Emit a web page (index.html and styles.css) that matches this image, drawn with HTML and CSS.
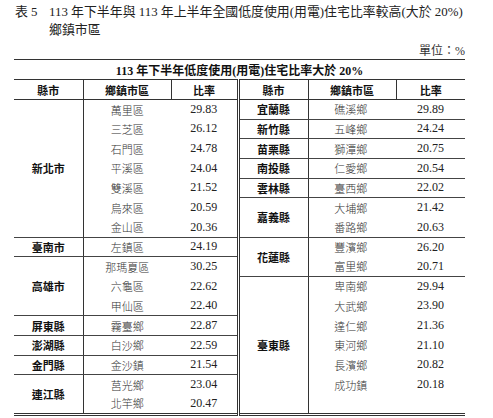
FILE: index.html
```html
<!DOCTYPE html>
<html lang="zh-Hant">
<head>
<meta charset="utf-8">
<link rel="stylesheet" href="styles.css">
</head>
<body>
<div class="page">
  <div class="title">
    <span class="tno">表 5</span>
    <span class="ttext">113 年下半年與 113 年上半年全國低度使用(用電)住宅比率較高(大於 20%)<br>鄉鎮市區</span>
  </div>
  <div class="unit">單位：%</div>
  <table class="tbl">
    <colgroup>
      <col class="c1"><col class="c2"><col class="c3"><col class="c4"><col class="c5"><col class="c6">
    </colgroup>
    <thead>
      <tr class="cap"><th colspan="6">113 年下半年低度使用(用電)住宅比率大於 20%</th></tr>
      <tr class="hd">
        <th>縣市</th><th>鄉鎮市區</th><th>比率</th>
        <th class="mid">縣市</th><th>鄉鎮市區</th><th class="last">比率</th>
      </tr>
    </thead>
    <tbody>
      <tr>
        <td class="cty e" rowspan="7">新北市</td><td class="twn">萬里區</td><td class="num">29.83</td>
        <td class="cty mid e">宜蘭縣</td><td class="twn r e">礁溪鄉</td><td class="num e">29.89</td>
      </tr>
      <tr>
        <td class="twn">三芝區</td><td class="num">26.12</td>
        <td class="cty mid e">新竹縣</td><td class="twn r e">五峰鄉</td><td class="num e">24.24</td>
      </tr>
      <tr>
        <td class="twn">石門區</td><td class="num">24.78</td>
        <td class="cty mid e">苗栗縣</td><td class="twn r e">獅潭鄉</td><td class="num e">20.75</td>
      </tr>
      <tr>
        <td class="twn">平溪區</td><td class="num">24.04</td>
        <td class="cty mid e">南投縣</td><td class="twn r e">仁愛鄉</td><td class="num e">20.54</td>
      </tr>
      <tr>
        <td class="twn">雙溪區</td><td class="num">21.52</td>
        <td class="cty mid e">雲林縣</td><td class="twn r e">臺西鄉</td><td class="num e">22.02</td>
      </tr>
      <tr>
        <td class="twn">烏來區</td><td class="num">20.59</td>
        <td class="cty mid e" rowspan="2">嘉義縣</td><td class="twn r">大埔鄉</td><td class="num">21.42</td>
      </tr>
      <tr>
        <td class="twn e">金山區</td><td class="num e">20.36</td>
        <td class="twn r e">番路鄉</td><td class="num e">20.63</td>
      </tr>
      <tr>
        <td class="cty e">臺南市</td><td class="twn e">左鎮區</td><td class="num e">24.19</td>
        <td class="cty mid e" rowspan="2">花蓮縣</td><td class="twn r">豐濱鄉</td><td class="num">26.20</td>
      </tr>
      <tr>
        <td class="cty e" rowspan="3">高雄市</td><td class="twn">那瑪夏區</td><td class="num">30.25</td>
        <td class="twn r e">富里鄉</td><td class="num e">20.71</td>
      </tr>
      <tr>
        <td class="twn">六龜區</td><td class="num">22.62</td>
        <td class="cty mid" rowspan="7">臺東縣</td><td class="twn r">卑南鄉</td><td class="num">29.94</td>
      </tr>
      <tr>
        <td class="twn e">甲仙區</td><td class="num e">22.40</td>
        <td class="twn r">大武鄉</td><td class="num">23.90</td>
      </tr>
      <tr>
        <td class="cty e">屏東縣</td><td class="twn e">霧臺鄉</td><td class="num e">22.87</td>
        <td class="twn r">達仁鄉</td><td class="num">21.36</td>
      </tr>
      <tr>
        <td class="cty e">澎湖縣</td><td class="twn e">白沙鄉</td><td class="num e">22.59</td>
        <td class="twn r">東河鄉</td><td class="num">21.10</td>
      </tr>
      <tr>
        <td class="cty e">金門縣</td><td class="twn e">金沙鎮</td><td class="num e">21.54</td>
        <td class="twn r">長濱鄉</td><td class="num">20.82</td>
      </tr>
      <tr>
        <td class="cty" rowspan="2">連江縣</td><td class="twn">莒光鄉</td><td class="num">23.04</td>
        <td class="twn r">成功鎮</td><td class="num">20.18</td>
      </tr>
      <tr>
        <td class="twn">北竿鄉</td><td class="num">20.47</td>
        <td class="twn r"></td><td class="num"></td>
      </tr>
    </tbody>
  </table>
</div>
</body>
</html>
```

FILE: styles.css
```css
html, body {
  margin: 0;
  padding: 0;
  background: #ffffff;
}

body {
  font-family: "Liberation Serif", "Noto Sans CJK TC", serif;
  color: #1a1a1a;
}

.page {
  padding: 3px 0 0 14px;
  width: 451px;
}

.title {
  display: flex;
  font-size: 12.9px;
  line-height: 18px;
  color: #222;
  white-space: nowrap;
}

.tno {
  flex: 0 0 34px;
  padding-left: 1px;
}

.ttext {
  flex: 1;
}

.unit {
  margin-top: 4px;
  text-align: right;
  font-size: 12px;
  line-height: 16px;
  color: #333;
}

.tbl {
  width: 451px;
  border-collapse: collapse;
  table-layout: fixed;
  border-top: 1px solid #333;
  border-bottom: 3px double #333;
}

.c1 { width: 69px; }
.c2 { width: 88px; }
.c3 { width: 67px; }
.c4 { width: 70px; }
.c5 { width: 88px; }
.c6 { width: 69px; }

.tbl th,
.tbl td {
  padding: 0;
  text-align: center;
  vertical-align: middle;
  white-space: nowrap;
}

.cap th {
  height: 19px;
  font-size: 12px;
  font-weight: bold;
  border-bottom: 1px solid #333;
  color: #111;
}

.hd th {
  height: 19px;
  font-size: 11px;
  font-weight: bold;
  border-bottom: 1px solid #333;
  border-left: 1px solid #333;
  color: #111;
}

.hd th:first-child {
  border-left: none;
}

.tbl .mid {
  border-left: 3px double #333;
}

.tbl tbody tr {
  height: 19.66px;
}

.cty {
  font-size: 11px;
  font-weight: bold;
  color: #111;
}

.twn {
  font-size: 11px;
  font-weight: 300;
  color: #333;
}

.tbl tbody td.twn {
  border-left: 1px solid #333;
}

.tbl tbody td.r {
  padding-right: 3px;
}

.num {
  font-size: 12px;
  color: #222;
}

.tbl .e {
  border-bottom: 1px solid #444;
}
```
